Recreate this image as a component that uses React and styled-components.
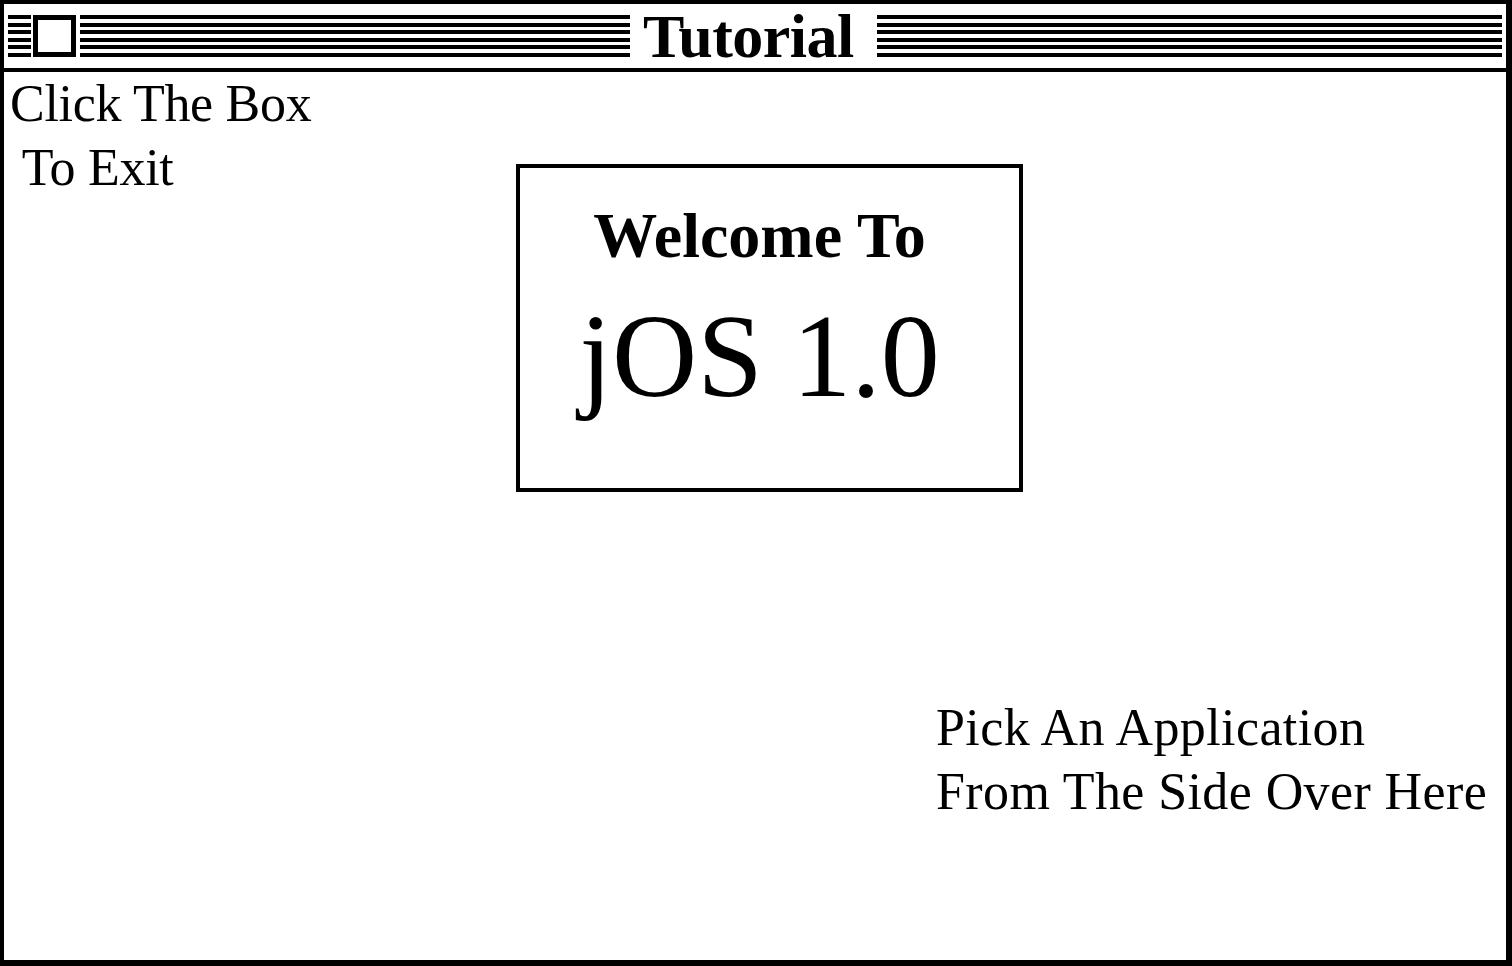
import styled, { createGlobalStyle } from 'styled-components';

const GlobalStyle = createGlobalStyle`
  html, body {
    margin: 0;
    padding: 0;
    background: #fff;
  }
  body {
    font-family: "Liberation Serif", "Times New Roman", serif;
    color: #000;
  }
`;

const Window = styled.div`
  box-sizing: border-box;
  width: 100vw;
  height: 100vh;
  border: 4px solid #000;
  border-right-width: 6px;
  border-bottom-width: 6px;
  display: flex;
  flex-direction: column;
  background: #fff;
  overflow: hidden;
`;

const TitleBar = styled.div`
  height: 64px;
  flex: 0 0 64px;
  border-bottom: 4px solid #000;
  display: flex;
  align-items: center;
  padding: 0 4px;
`;

const Stripes = styled.div`
  height: 42px;
  width: ${(p) => (p.$width ? `${p.$width}px` : 'auto')};
  flex: ${(p) => (p.$width ? '0 0 auto' : '1 1 auto')};
  display: flex;
  flex-direction: column;
  justify-content: space-between;
`;

const StripeLine = styled.div`
  height: 4px;
  background: #000;
`;

const CloseBox = styled.button`
  box-sizing: border-box;
  width: 43px;
  height: 42px;
  margin: 0 4px 0 2px;
  padding: 0;
  border: 5px solid #000;
  background: #fff;
  cursor: pointer;
`;

const Title = styled.div`
  flex: 0 0 auto;
  padding: 0 23px 0 13px;
  font-size: 62px;
  font-weight: bold;
  line-height: 64px;
  letter-spacing: -0.5px;
`;

const Content = styled.div`
  flex: 1;
  display: flex;
  flex-direction: column;
`;

const TopRow = styled.div`
  display: flex;
  align-items: flex-start;
`;

const Note = styled.div`
  font-size: 52px;
  line-height: 64px;
  white-space: pre;
  letter-spacing: -0.3px;
`;

const SideNote = styled(Note)`
  width: 506px;
  padding-left: 6px;
  flex: 0 0 auto;
`;

const WelcomeBox = styled.div`
  box-sizing: border-box;
  width: 507px;
  height: 328px;
  margin-top: 92px;
  border: 4px solid #000;
  display: flex;
  flex-direction: column;
  align-items: center;
  padding: 36px 20px 0 0;
`;

const WelcomeLine = styled.div`
  font-size: 64px;
  font-weight: bold;
  line-height: 64px;
`;

const VersionLine = styled.div`
  font-size: 118px;
  line-height: 118px;
  margin-top: 30px;
`;

const BottomNote = styled(Note)`
  margin: 204px 0 0 932px;
  letter-spacing: 0.4px;
`;

function StripeBlock({ width }) {
  return (
    <Stripes $width={width}>
      {[0, 1, 2, 3, 4, 5].map((i) => (
        <StripeLine key={i} />
      ))}
    </Stripes>
  );
}

export default function App() {
  return (
    <>
      <GlobalStyle />
      <Window>
        <TitleBar>
          <StripeBlock width={23} />
          <CloseBox aria-label="Close" />
          <StripeBlock width={550} />
          <Title>Tutorial</Title>
          <StripeBlock />
        </TitleBar>
        <Content>
          <TopRow>
            <SideNote>{'Click The Box\n To Exit'}</SideNote>
            <WelcomeBox>
              <WelcomeLine>Welcome To</WelcomeLine>
              <VersionLine>jOS 1.0</VersionLine>
            </WelcomeBox>
          </TopRow>
          <BottomNote>{'Pick An Application\nFrom The Side Over Here'}</BottomNote>
        </Content>
      </Window>
    </>
  );
}
